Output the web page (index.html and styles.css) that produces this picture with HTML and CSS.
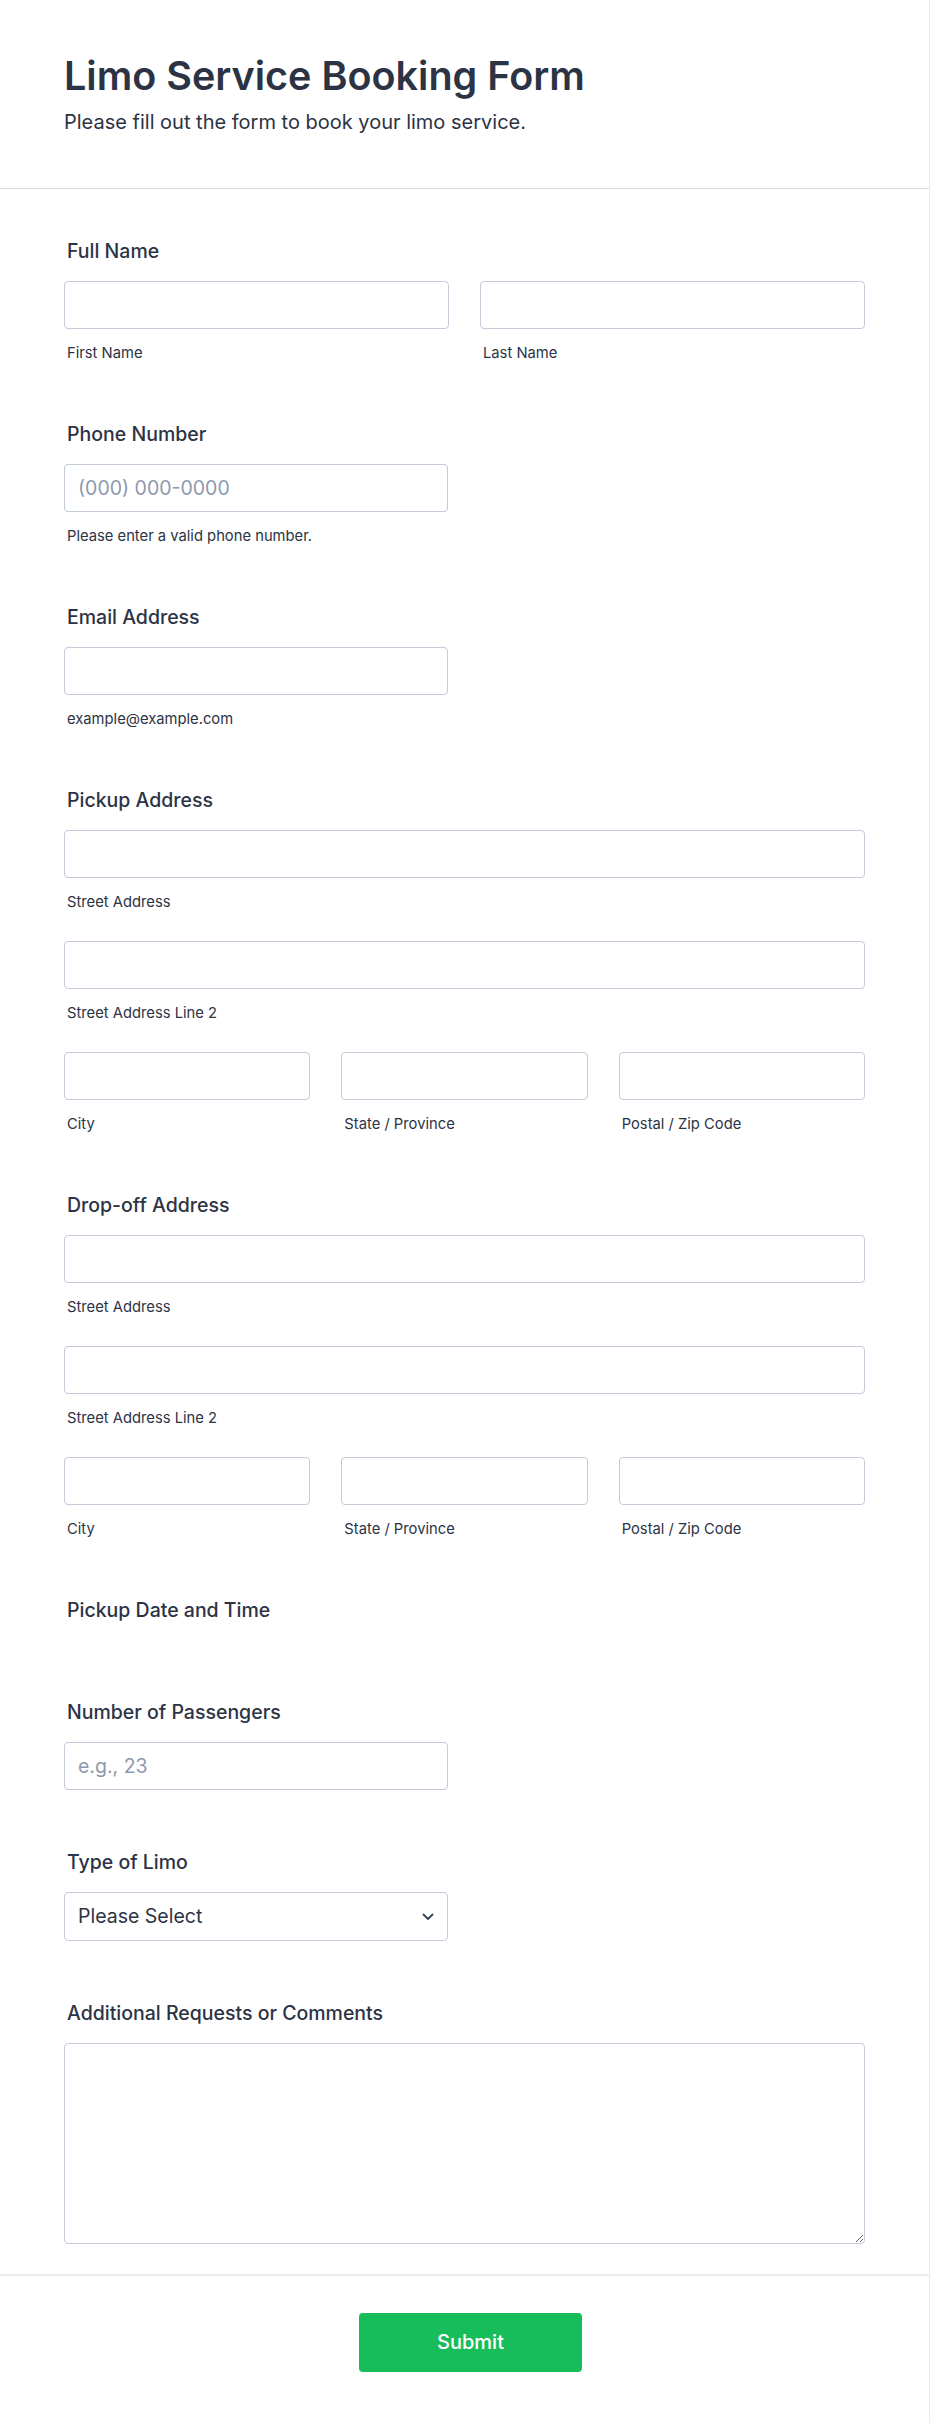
FILE: index.html
```html
<!DOCTYPE html>
<html lang="en">
<head>
<meta charset="utf-8">
<title>Limo Service Booking Form</title>
<link rel="stylesheet" href="styles.css">
</head>
<body>
<div class="page">
  <header class="form-header">
    <h1 class="form-title">Limo Service Booking Form</h1>
    <p class="form-subtitle">Please fill out the form to book your limo service.</p>
  </header>

  <form class="form-body">
    <div class="field">
      <label class="label">Full Name</label>
      <div class="grid grid-2">
        <div class="sub"><input class="input" type="text"><span class="sublabel">First Name</span></div>
        <div class="sub"><input class="input" type="text"><span class="sublabel">Last Name</span></div>
      </div>
    </div>

    <div class="field">
      <label class="label">Phone Number</label>
      <div class="half"><input class="input" type="tel" placeholder="(000) 000-0000"><span class="sublabel">Please enter a valid phone number.</span></div>
    </div>

    <div class="field">
      <label class="label">Email Address</label>
      <div class="half"><input class="input" type="email"><span class="sublabel">example@example.com</span></div>
    </div>

    <div class="field">
      <label class="label">Pickup Address</label>
      <div class="rows">
        <div class="sub"><input class="input" type="text"><span class="sublabel">Street Address</span></div>
        <div class="sub"><input class="input" type="text"><span class="sublabel">Street Address Line 2</span></div>
        <div class="grid grid-3">
          <div class="sub"><input class="input" type="text"><span class="sublabel">City</span></div>
          <div class="sub"><input class="input" type="text"><span class="sublabel">State / Province</span></div>
          <div class="sub"><input class="input" type="text"><span class="sublabel">Postal / Zip Code</span></div>
        </div>
      </div>
    </div>

    <div class="field">
      <label class="label">Drop-off Address</label>
      <div class="rows">
        <div class="sub"><input class="input" type="text"><span class="sublabel">Street Address</span></div>
        <div class="sub"><input class="input" type="text"><span class="sublabel">Street Address Line 2</span></div>
        <div class="grid grid-3">
          <div class="sub"><input class="input" type="text"><span class="sublabel">City</span></div>
          <div class="sub"><input class="input" type="text"><span class="sublabel">State / Province</span></div>
          <div class="sub"><input class="input" type="text"><span class="sublabel">Postal / Zip Code</span></div>
        </div>
      </div>
    </div>

    <div class="field">
      <label class="label">Pickup Date and Time</label>
      <div class="empty-control"></div>
    </div>

    <div class="field">
      <label class="label">Number of Passengers</label>
      <div class="half"><input class="input" type="text" placeholder="e.g., 23"></div>
    </div>

    <div class="field">
      <label class="label">Type of Limo</label>
      <div class="half select-wrap">
        <select class="input select">
          <option>Please Select</option>
          <option>Stretch Limo</option>
          <option>SUV Limo</option>
          <option>Party Bus</option>
        </select>
        <svg class="chevron" width="12" height="8" viewBox="0 0 12 8" aria-hidden="true"><path d="M1.5 1.5 L6 6 L10.5 1.5" fill="none" stroke="#3e4a60" stroke-width="2" stroke-linecap="round" stroke-linejoin="round"/></svg>
      </div>
    </div>

    <div class="field">
      <label class="label">Additional Requests or Comments</label>
      <textarea class="input textarea"></textarea>
    </div>
  </form>

  <footer class="form-footer">
    <button class="submit" type="button">Submit</button>
  </footer>
</div>
</body>
</html>
```

FILE: styles.css
```css
* { box-sizing: border-box; }

html, body {
  margin: 0;
  padding: 0;
  background: #ffffff;
}

body {
  font-family: Inter, "Noto Sans", "Liberation Sans", sans-serif;
  color: #2c3345;
}

.page {
  width: 930px;
  min-height: 2423px;
  border-right: 1px solid #ebebf1;
  background: #ffffff;
}

.form-header {
  padding: 54px 64px 54.5px;
  border-bottom: 1px solid #dadae6;
}

.form-title {
  margin: 0;
  font-size: 39.5px;
  line-height: 45.6px;
  font-weight: 600;
  color: #2c3345;
}

.form-subtitle {
  margin: 10px 0 0;
  font-size: 20px;
  line-height: 24px;
  font-weight: 400;
  color: #2c3345;
}

.form-body {
  padding: 49.5px 64px 30px;
  display: flex;
  flex-direction: column;
  gap: 60px;
}

.field {
  display: flex;
  flex-direction: column;
}

.label {
  padding-left: 3px;
  font-size: 19.5px;
  line-height: 24px;
  font-weight: 500;
  color: #2c3345;
  margin-bottom: 18px;
}

.grid {
  display: grid;
  column-gap: 31px;
}
.grid-2 { grid-template-columns: 1fr 1fr; }
.grid-3 { grid-template-columns: 1fr 1fr 1fr; }

.rows {
  display: flex;
  flex-direction: column;
  gap: 30px;
}

.sub, .half {
  display: flex;
  flex-direction: column;
}

.half { width: 384px; }

.input {
  display: block;
  width: 100%;
  height: 48px;
  margin: 0;
  padding: 0 13px;
  border: 1px solid #c3cad8;
  border-radius: 4px;
  background: #ffffff;
  font-family: Inter, "Noto Sans", "Liberation Sans", sans-serif;
  font-size: 19.5px;
  color: #2c3345;
  outline: none;
}

.input::placeholder {
  color: #8d99ae;
  opacity: 1;
}

.sublabel {
  padding-left: 3px;
  margin-top: 15px;
  font-size: 14.75px;
  line-height: 18px;
  color: #2c3345;
}

.empty-control { height: 0; }

.select-wrap { position: relative; }

.select {
  appearance: none;
  -webkit-appearance: none;
  padding-right: 40px;
  height: 49px;
}

.chevron {
  position: absolute;
  right: 14px;
  top: 21px;
  pointer-events: none;
}

.textarea {
  height: 201px;
  padding: 12px 13px;
  resize: vertical;
}

.form-footer {
  border-top: 2px solid #ebebf2;
  padding: 37px 0 50px 12px;
  display: flex;
  justify-content: center;
}

.submit {
  width: 223px;
  height: 59px;
  border: none;
  border-radius: 4px;
  background: #18bd5b;
  color: #ffffff;
  font-family: Inter, "Noto Sans", "Liberation Sans", sans-serif;
  font-size: 20px;
  font-weight: 500;
  cursor: pointer;
}
```
